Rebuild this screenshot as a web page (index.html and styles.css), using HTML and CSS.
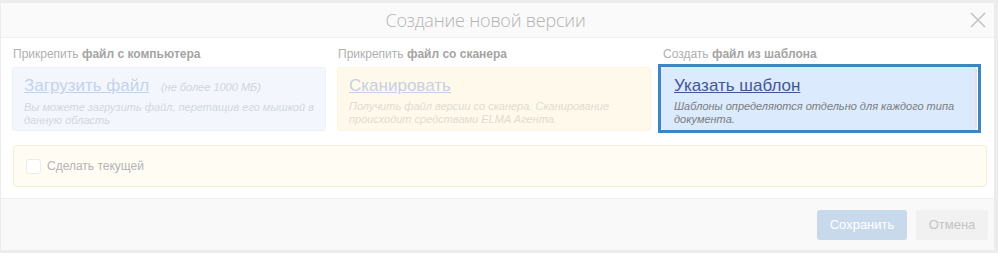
FILE: index.html
```html
<!DOCTYPE html>
<html lang="ru">
<head>
    <meta charset="UTF-8">
    <title>Создание новой версии</title>
    <link rel="stylesheet" href="styles.css">
</head>
<body>
    <div class="dialog">
        <div class="dialog-header">
            <span class="dialog-title">Создание новой версии</span>
            <span class="dialog-close">
                <svg width="16" height="16" viewBox="0 0 16 16"><path d="M1 1 L15 15 M15 1 L1 15" stroke="#c4c4c4" stroke-width="1.6" fill="none"/></svg>
            </span>
        </div>

        <div class="dialog-body">
            <div class="sources">
                <div class="source">
                    <div class="source-label">Прикрепить <b>файл с компьютера</b></div>
                    <div class="source-card card-upload">
                        <div class="source-title"><a href="#">Загрузить файл</a> <span class="limit">(не более 1000 МБ)</span></div>
                        <div class="source-desc">Вы можете загрузить файл, перетащив его мышкой в данную область</div>
                    </div>
                </div>
                <div class="source">
                    <div class="source-label">Прикрепить <b>файл со сканера</b></div>
                    <div class="source-card card-scan">
                        <div class="source-title"><a href="#">Сканировать</a></div>
                        <div class="source-desc">Получить файл версии со сканера. Сканирование происходит средствами ELMA Агента.</div>
                    </div>
                </div>
                <div class="source source-active">
                    <div class="source-label">Создать <b>файл из шаблона</b></div>
                    <div class="source-frame">
                        <div class="source-card card-template">
                            <div class="source-title"><a href="#">Указать шаблон</a></div>
                            <div class="source-desc">Шаблоны определяются отдельно для каждого типа документа.</div>
                        </div>
                    </div>
                </div>
            </div>

            <div class="current-panel">
                <label class="check"><span class="check-box"></span>Сделать текущей</label>
            </div>
        </div>

        <div class="dialog-footer">
            <button class="btn btn-save">Сохранить</button>
            <button class="btn btn-cancel">Отмена</button>
        </div>
    </div>
</body>
</html>
```

FILE: styles.css
```css
body {
    margin: 0;
    background: #ececec;
    font-family: "Liberation Sans", Arial, sans-serif;
}

.dialog {
    margin: 3px 4px 0 1px;
    height: 247px;
    background: #fff;
    display: flex;
    flex-direction: column;
}

.dialog-header {
    height: 34px;
    background: #fafafa;
    border-bottom: 1px solid #f0f0f0;
    display: flex;
    align-items: center;
    justify-content: center;
    padding-right: 24px;
    position: relative;
}

.dialog-title {
    font-family: "Open Sans", sans-serif;
    font-weight: 300;
    font-size: 18px;
    color: #b4b4b4;
    letter-spacing: -0.2px;
}

.dialog-close {
    position: absolute;
    right: 8px;
    top: 9px;
    width: 16px;
    height: 16px;
}

.dialog-body {
    flex: 1;
    padding: 7px 7px 0 11px;
}

.sources {
    display: grid;
    grid-template-columns: 314px 314px 319px;
    column-gap: 11px;
}

.source-label {
    font-size: 12px;
    color: #b0b0b0;
    height: 14px;
    margin: 2px 0 0 1px;
}

.source-label b {
    color: #a4a4a4;
}

.source-card {
    height: 64px;
    border-radius: 3px;
    padding: 8px 4px 0 11px;
    box-sizing: border-box;
    margin-top: 6px;
}

.card-upload {
    background: #f3f7fd;
    border: 1px solid #edf2fa;
}

.card-scan {
    background: #fff9ec;
    border: 1px solid #fcf4e2;
}

.source-title {
    font-size: 17px;
    line-height: 20px;
}

.source-title a {
    color: #c3d2ec;
}

.card-scan .source-title a {
    color: #c7d0e4;
}

.limit {
    font-size: 11px;
    font-style: italic;
    color: #cfd4de;
    margin-left: 7px;
}

.source-desc {
    font-size: 11px;
    font-style: italic;
    line-height: 13px;
    color: #d2d6de;
    margin-top: 4px;
}

.card-scan .source-desc {
    color: #e1dccf;
}

.source-frame {
    margin: 3px 0 0 -4px;
    border: 3px solid #3d86c5;
    height: 69px;
    box-sizing: border-box;
    background: #fff;
}

.card-template {
    margin: 0 3px 0 0;
    height: 63px;
    background: #dbeafc;
    border-radius: 3px;
    box-shadow: 2px 0 0 #e3e3e3;
    padding-top: 9px;
    padding-left: 13px;
}

.card-template .source-title a {
    color: #44569a;
}

.card-template .source-desc {
    color: #7c7c7c;
}

.current-panel {
    margin: 12px 0 0 1px;
    width: 974px;
    height: 42px;
    box-sizing: border-box;
    background: #fffcf4;
    border: 1px solid #f6efd8;
    border-radius: 3px;
    display: flex;
    align-items: center;
    padding-left: 12px;
}

.check {
    display: flex;
    align-items: center;
    font-size: 12px;
    color: #b4b4b4;
}

.check-box {
    width: 13px;
    height: 13px;
    border: 1px solid #ececec;
    border-radius: 3px;
    background: #fff;
    margin-right: 6px;
}

.dialog-footer {
    height: 51px;
    background: #f9f9f9;
    border-top: 1px solid #f0f0f0;
    display: flex;
    align-items: center;
    justify-content: flex-end;
    gap: 9px;
    padding-right: 6px;
}

.btn {
    height: 30px;
    border: none;
    border-radius: 3px;
    font-family: "Liberation Sans", Arial, sans-serif;
    font-size: 13px;
    padding: 0 12px;
}

.btn-save {
    background: #c9d9ec;
    color: #fff;
    width: 90px;
}

.btn-cancel {
    background: #f1f1f1;
    color: #c4c4c4;
    width: 72px;
}
```
